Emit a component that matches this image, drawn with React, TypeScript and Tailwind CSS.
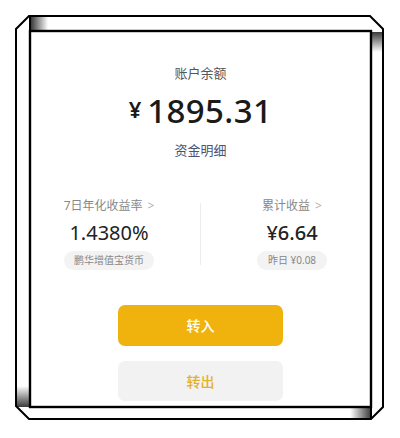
function Frame() {
  return (
    <svg className="absolute inset-0 pointer-events-none" width="400" height="438" viewBox="0 0 400 438" fill="none">
      <defs>
        <linearGradient id="gTop" x1="0" y1="0" x2="1" y2="0">
          <stop offset="0" stopColor="#3a3a3a" />
          <stop offset="1" stopColor="#ffffff" />
        </linearGradient>
        <linearGradient id="gRight" x1="0" y1="0" x2="0" y2="1">
          <stop offset="0" stopColor="#3a3a3a" />
          <stop offset="1" stopColor="#ffffff" />
        </linearGradient>
        <linearGradient id="gLeft" x1="0" y1="1" x2="0" y2="0">
          <stop offset="0" stopColor="#3a3a3a" />
          <stop offset="1" stopColor="#ffffff" />
        </linearGradient>
        <linearGradient id="gBottom" x1="1" y1="0" x2="0" y2="0">
          <stop offset="0" stopColor="#3a3a3a" />
          <stop offset="1" stopColor="#ffffff" />
        </linearGradient>
      </defs>
      <rect x="31" y="17" width="17" height="14" fill="url(#gTop)" />
      <rect x="372" y="32" width="11" height="20" fill="url(#gRight)" />
      <rect x="17" y="386" width="13" height="21" fill="url(#gLeft)" />
      <rect x="350" y="408" width="21" height="11" fill="url(#gBottom)" />
      <path d="M29 16 L370 16 L383 29 L383 407 L371 419 L29 419 L16 406 L16 29 Z" stroke="#000" strokeWidth="2" strokeLinejoin="miter" />
      <rect x="30" y="31" width="341" height="376" stroke="#000" strokeWidth="2.4" />
      <path d="M30 16 L30 31 M371 407 L371 419" stroke="#000" strokeWidth="2" />
    </svg>
  )
}

export default function App() {
  return (
    <div className="relative w-[400px] h-[438px] bg-white overflow-hidden" style={{ fontFamily: '"Noto Sans", "Noto Sans CJK SC", sans-serif' }}>
      <div className="mt-[31px] ml-[30px] w-[341px] h-[376px] flex flex-col items-center pt-[33px]">
        <p className="text-[13px] leading-[18px] text-[#555]">账户余额</p>
        <div className="mt-[9px] flex items-start h-[40px] text-[#1a1a1a]">
          <span className="text-[22px] leading-[22px] font-semibold mt-[7px] mr-[6px]">¥</span>
          <span className="text-[33px] leading-[40px] font-medium tracking-[0.4px]">1895.31</span>
        </div>
        <p className="mt-[10px] text-[13px] leading-[18px] text-[#4a5470]">资金明细</p>

        <div className="mt-[38px] flex items-center justify-center gap-[31px] w-full">
          <div className="w-[120px] flex flex-col items-center">
            <p className="text-[12px] leading-[18px] text-[#888]">
              7日年化收益率<span className="ml-[5px] text-[#b0b0b0]">&gt;</span>
            </p>
            <p className="mt-[5px] text-[20px] leading-[26px] text-[#222]">1.4380%</p>
            <span className="mt-[5px] h-[19px] px-[10px] rounded-full bg-[#f3f3f3] text-[10px] leading-[19px] text-[#888]">鹏华增值宝货币</span>
          </div>
          <div className="w-px h-[62px] bg-[#ececec]" />
          <div className="w-[120px] flex flex-col items-center">
            <p className="text-[12px] leading-[18px] text-[#888]">
              累计收益<span className="ml-[5px] text-[#b0b0b0]">&gt;</span>
            </p>
            <p className="mt-[5px] text-[20px] leading-[26px] font-medium text-[#222]">¥6.64</p>
            <span className="mt-[5px] h-[19px] px-[11px] rounded-full bg-[#f3f3f3] text-[10px] leading-[19px] text-[#888]">昨日 ¥0.08</span>
          </div>
        </div>

        <button className="mt-[35px] w-[165px] h-[41px] rounded-[7px] bg-[#f0b30e] text-white text-[14px] font-medium">转入</button>
        <button className="mt-[15px] w-[165px] h-[40px] rounded-[7px] bg-[#f2f2f2] text-[#e3b02e] text-[14px] font-medium">转出</button>
      </div>
      <Frame />
    </div>
  )
}
